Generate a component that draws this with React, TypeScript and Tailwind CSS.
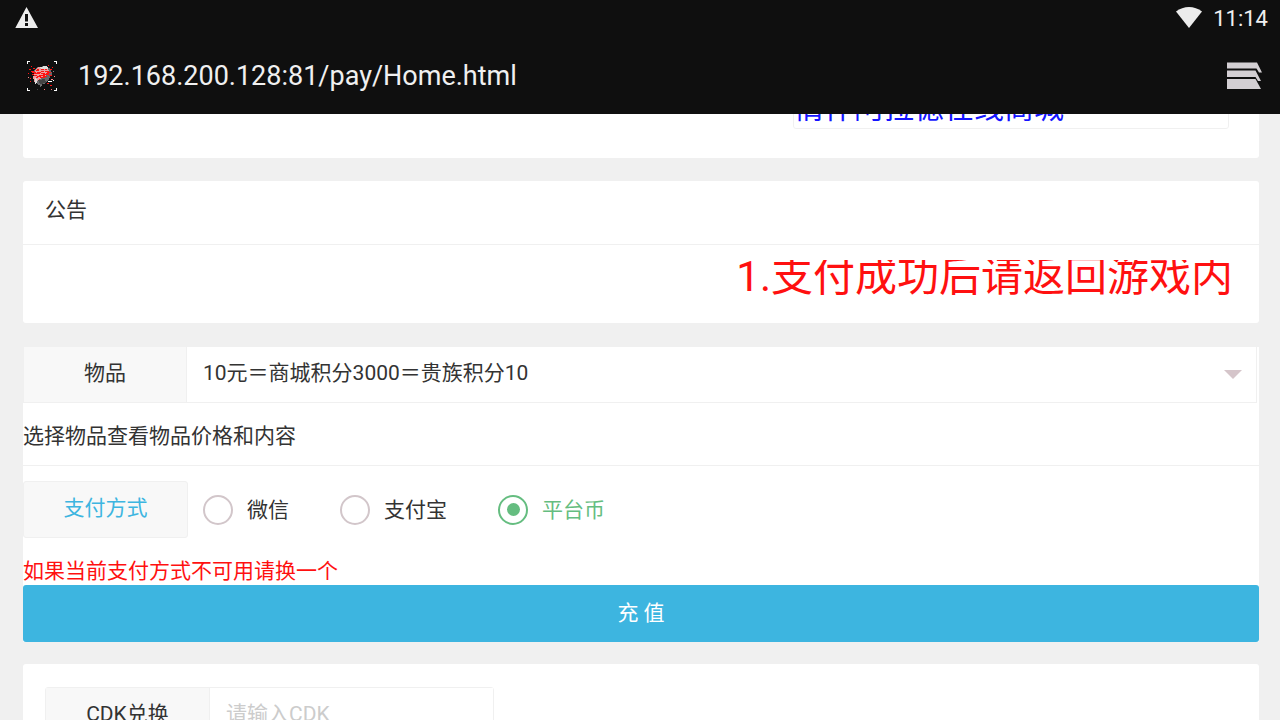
import React from 'react';

const payMethods = [
  { id: 'wechat', label: '微信' },
  { id: 'alipay', label: '支付宝' },
  { id: 'coin', label: '平台币' },
];

const goods = ['10元＝商城积分3000＝贵族积分10'];

// specks of the site icon: x, y, width, colour
const specks: [number, number, number, string][] = [
  [4, 5, 1, '#f11'], [2, 8, 2, '#f11'], [4, 10, 3, '#f11'], [1, 12, 1, '#f11'], [5, 13, 2, '#f11'],
  [21, 4, 1, '#f11'], [25, 6, 1, '#f11'], [23, 8, 2, '#f11'], [26, 10, 1, '#888'], [3, 17, 1, '#f11'],
  [1, 16, 1, '#f88'], [3, 20, 1, '#f11'], [6, 7, 2, '#f11'], [22, 14, 3, '#f11'], [27, 15, 1, '#f88'],
  [21, 20, 4, '#fff'], [20, 22, 2, '#f11'], [26, 19, 1, '#fff'], [23, 24, 2, '#f11'], [17, 28, 1, '#f77'],
  [10, 28, 1, '#444'], [24, 28, 1, '#f77'], [13, 25, 1, '#666'], [24, 18, 2, '#f88'], [13, 24, 2, '#777'],
  [9, 9, 3, '#f11'], [14, 8, 3, '#f11'], [7, 12, 6, '#f11'], [16, 13, 6, '#f11'], [10, 15, 4, '#f11'],
  [13, 16, 5, '#f11'], [18, 10, 4, '#f11'], [16, 15, 4, '#f11'], [18, 8, 2, '#f11'], [12, 18, 1, '#f11'],
  [5, 11, 4, '#f11'], [7, 14, 3, '#f11'], [9, 16, 2, '#f11'], [20, 11, 4, '#f11'], [19, 12, 3, '#f11'],
  [10, 8, 2, '#f11'], [14, 10, 3, '#f11'], [10, 11, 4, '#f11'], [14, 12, 4, '#f11'], [12, 14, 6, '#f11'],
];

const WarningIcon = () => (
  <svg width="24" height="24" viewBox="0 0 24 24" fill="#ececec">
    <path fillRule="evenodd" d="M11.500 0 23 21H.3ZM10 7v7.500h3V7ZM10 16v3h3v-3Z" />
  </svg>
);

const WifiIcon = () => (
  <svg width="26" height="24" viewBox="0 0 26 24" fill="#ececec">
    <path d="M0 4.600C7.500-1.500 18.500-1.500 26 4.600L13 21Z" />
  </svg>
);

const TabsIcon = () => (
  <svg width="36" height="28" viewBox="0 0 36 28" fill="#d3cfd3">
    <path d="M1 .5h30l5 10h-3l-2.500-4H1Z" />
    <path d="M1 8.500h28.500l5.500 10.500h-3l-2.500-4H1Z" />
    <path d="M1 17h28.500l5.500 10H1Z" />
  </svg>
);

const SiteIcon = () => (
  <svg width="30" height="30" viewBox="0 0 30 30" shapeRendering="crispEdges">
    <path d="M.5 3V.5H3M27 .5h2.500V3M.5 27v2.500H3M27 29.500h2.500V27" fill="none" stroke="#fff" />
    <path d="M7 9l4-3 8-1 5 3 1 5-3 5-4 5-6 1-4-3Z" fill="#68686b" />
    <path d="M8 9l4-3h8l2 4-2 4-9 5-3 3-2-5Z" fill="#e9a0a0" />
    <path d="M13 6l6-1 3 2-3 1h-5Z" fill="#ddd" />
    <path d="M11 19l7-1 1 4-6 1Z" fill="#444" />
    <path d="M8 17l2 1v4l-2 1Z" fill="#ddd" />
    {specks.map(([x, y, w, c], i) => (
      <rect key={i} x={x} y={y} width={w} height="1" fill={c} />
    ))}
  </svg>
);

export default function App() {
  const [pay, setPay] = React.useState('coin');

  return (
    <div className="h-screen overflow-hidden bg-[#f0f0f0] text-[21px] leading-[28px] text-[#333] font-[Roboto,'Noto_Sans_CJK_SC',sans-serif]">
      <header className="bg-[#0f0f0f] text-[#f0f0f0]">
        <div className="flex h-[38px] items-center justify-between pl-[15px] pr-3">
          <WarningIcon />
          <div className="flex items-center gap-[11px] text-[22px]">
            <WifiIcon />
            <span>11:14</span>
          </div>
        </div>
        <div className="flex h-[76px] items-center pb-px pl-[27px] pr-[18px]">
          <SiteIcon />
          <span className="ml-[21px] flex-1 text-[27px]">192.168.200.128:81/pay/Home.html</span>
          <button type="button" aria-label="Tabs">
            <TabsIcon />
          </button>
        </div>
      </header>

      <main className="pl-[23px] pr-[21px]">
        <section className="mb-[23px] flex h-[44px] items-end justify-end overflow-hidden rounded-b-[3px] bg-white px-[30px] pb-[29px]">
          <div className="w-[436px] shrink-0 rounded-[3px] border border-[#f0f0f0] text-[30px] leading-[40px] text-[#1414ff]">
            <a href="#shop">情怀阿拉德在线商城</a>
          </div>
        </section>

        <section className="mb-6 rounded-[3px] bg-white">
          <h2 className="border-b border-[#f0f0f0] px-[22px] pt-[15px] pb-5">公告</h2>
          <div className="px-[26px] pt-[15px] pb-7">
            <div className="h-[35px] overflow-hidden whitespace-nowrap text-right text-[42px] leading-[33px] text-[#ff1010]">
              1.支付成功后请返回游戏内
            </div>
          </div>
        </section>

        <form className="mb-[22px] bg-white" onSubmit={(e) => e.preventDefault()}>
          <div className="relative mr-[2px] flex h-14 border border-t-0 border-[#f0f0f0]">
            <label htmlFor="goods" className="w-[163px] border-r border-[#f0f0f0] bg-[#f8f8f8] pt-3 text-center">
              物品
            </label>
            <select id="goods" className="flex-1 appearance-none bg-white pl-4 pb-1 outline-none">
              {goods.map((g) => (
                <option key={g}>{g}</option>
              ))}
            </select>
            <svg className="pointer-events-none absolute right-[14px] top-[23px]" width="18" height="9" viewBox="0 0 18 9">
              <path d="M0 0h18L9 9Z" fill="#d5c5ca" />
            </svg>
          </div>

          <p className="border-b border-[#f0f0f0] pt-[19px] pb-[15px]">选择物品查看物品价格和内容</p>

          <div role="radiogroup" aria-labelledby="pay-title" className="mt-[15px] flex h-[57px] items-center">
            <div
              id="pay-title"
              className="h-full w-[165px] rounded-[3px] border border-[#f0f0f0] bg-[#f8f8f8] pt-3 text-center text-[#3db5e0]"
            >
              支付方式
            </div>
            <div className="ml-[15px] flex gap-[51px]">
              {payMethods.map((m) => (
                <label key={m.id} className="flex items-center gap-[14px] has-checked:text-[#65bd80]">
                  <input
                    type="radio"
                    name="pay"
                    checked={pay === m.id}
                    onChange={() => setPay(m.id)}
                    className="grid size-[30px] appearance-none place-content-center rounded-full border-2 border-[#d2c6ca] checked:border-[#65bd80] checked:before:size-[13px] checked:before:rounded-full checked:before:bg-[#65bd80]"
                  />
                  {m.label}
                </label>
              ))}
            </div>
          </div>

          <p className="pt-[19px] text-[#ff1010]">如果当前支付方式不可用请换一个</p>
          <button type="submit" className="block h-[57px] w-full rounded-[3px] bg-[#3db5e0] pb-[2px] text-white">
            充 值
          </button>
        </form>

        <section className="rounded-[3px] bg-white px-[22px] py-[23px]">
          <div className="flex h-[57px] w-[449px] rounded-[3px] border border-[#f0f0f0]">
            <label htmlFor="cdk" className="w-[164px] shrink-0 border-r border-[#f0f0f0] bg-[#f8f8f8] pt-3 text-center">
              CDK兑换
            </label>
            <input
              id="cdk"
              placeholder="请输入CDK"
              className="min-w-0 flex-1 bg-white px-4 pb-1 outline-none placeholder:text-[#ccc]"
            />
          </div>
        </section>
      </main>
    </div>
  );
}
